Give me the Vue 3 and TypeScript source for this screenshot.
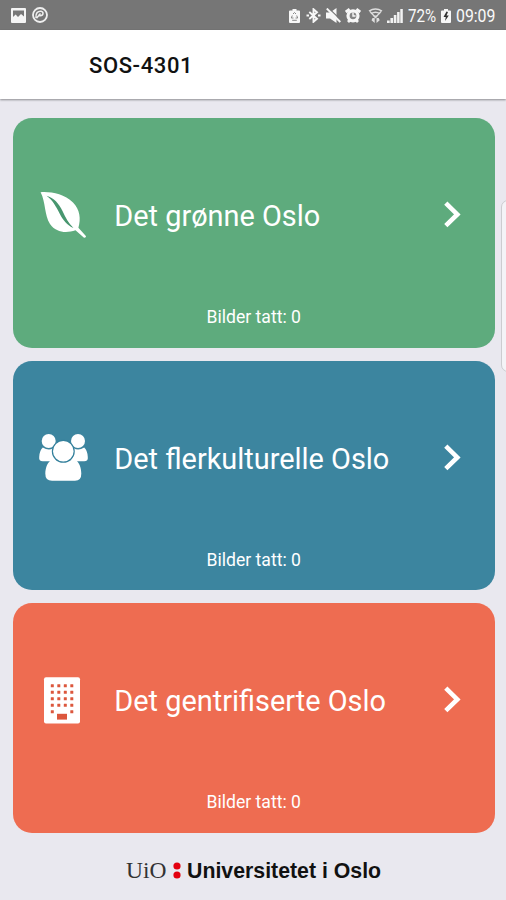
<script setup lang="ts">
interface Theme {
  id: 'green' | 'culture' | 'gentry'
  title: string
  photos: number
}

const themes: Theme[] = [
  { id: 'green', title: 'Det grønne Oslo', photos: 0 },
  { id: 'culture', title: 'Det flerkulturelle Oslo', photos: 0 },
  { id: 'gentry', title: 'Det gentrifiserte Oslo', photos: 0 },
]

const windows: { x: number; y: number }[] = []
for (let row = 0; row < 5; row++) {
  for (let col = 0; col < 4; col++) {
    if (row === 4 && (col === 1 || col === 2)) continue
    windows.push({ x: 12.8 + col * 6.5, y: 11.5 + row * 6.5 })
  }
}
</script>

<template>
  <div class="screen">
    <div class="status">
      <div class="status-left">
        <svg width="15" height="15" viewBox="0 0 15 15">
          <path fill="#f4f4f4" fill-rule="evenodd" d="M1 0H14Q15 0 15 1V14Q15 15 14 15H1Q0 15 0 14V1Q0 0 1 0ZM2 2.5V9L4.6 6.6L7 9L10 6L13 8.5V2.5Z" />
        </svg>
        <svg width="16" height="16" viewBox="0 0 16 16" fill="none" stroke="#efefef">
          <circle cx="8" cy="8" r="7" stroke-width="1.8" />
          <path d="M4 10.8C3.2 6 6 4 9 4.2C12 4.8 11.6 8.8 8.2 8.7L6.2 8.6M4.5 11.2L8.5 6.5" stroke-width="1.5" />
        </svg>
      </div>
      <div class="status-right">
        <svg class="s-saver" width="11" height="14" viewBox="0 0 11 14">
          <path fill="#f7f7f7" d="M3.5 0H7.5V1.5H10Q11 1.5 11 2.5V13Q11 14 10 14H1Q0 14 0 13V2.5Q0 1.5 1 1.5H3.5Z" />
          <path fill="none" stroke="#888" stroke-width="1" d="M4 5L5.5 3.5L7 5M3.3 6.5L2.3 9H4.5M7.7 6.5L8.7 9H6.5M3.2 11.3H7.8" />
        </svg>
        <svg class="s-bt" width="15" height="15" viewBox="0 0 15 15" fill="none" stroke="#f7f7f7" stroke-width="1.9">
          <path d="M3.3 4L11 10.8L7.5 13.8V1.2L11 4.2L3.3 11" />
          <path d="M.5 7.5H3M12 7.5H14.5" stroke-width="2" />
        </svg>
        <svg class="s-mute" width="15" height="15" viewBox="0 0 15 15">
          <path fill="#f7f7f7" d="M0 4.5H4L10.5 0V15L4 10.5H0Z" />
          <path stroke="#767676" stroke-width="1.2" d="M2.5 0L15 12" />
          <path stroke="#f7f7f7" stroke-width="1.9" d="M.8 .5L14.3 14" />
        </svg>
        <svg class="s-alarm" width="16" height="15" viewBox="0 0 16 15">
          <path stroke="#f7f7f7" stroke-width="2.8" d="M.8 4L4.6 1.2M15.2 4L11.4 1.2M3 14L5 12M13 14L11 12" />
          <circle cx="8" cy="7.8" r="5" fill="#858585" stroke="#f7f7f7" stroke-width="3.2" />
          <path fill="none" stroke="#f7f7f7" stroke-width="1.4" d="M8 4.5V8H10.5" />
        </svg>
        <svg class="s-wifi" width="15" height="15" viewBox="0 0 15 15" fill="none" stroke="#dedede">
          <path stroke-width="1.5" d="M1 3.2Q7.5-1 14 3.2M3 5.7Q7.5 2.8 12 5.7" />
          <path stroke-width="1.2" d="M2 3.5L7.5 9.5L13 3.5" />
          <path fill="#dedede" stroke="none" d="M5 7.5H10L8.5 9.5H6.5ZM4.5 10H6.7V15L3.5 12.2ZM8.5 10H10.7L11.7 12.2L8.5 15Z" />
        </svg>
        <svg class="s-signal" width="16" height="14" viewBox="0 0 16 14" fill="#f2f2f2">
          <path d="M0 11.5H2.7V14H0ZM3.4 9H6.1V14H3.4ZM6.8 6H9.4V14H6.8ZM10.1 3H12.6V14H10.1ZM13.3 0H15.8V14H13.3Z" />
        </svg>
        <span class="percent">72%</span>
        <svg class="s-battery" width="10" height="14" viewBox="0 0 10 14">
          <path fill="#f7f7f7" d="M3 0H7V1.5H9Q10 1.5 10 2.5V13Q10 14 9 14H1Q0 14 0 13V2.5Q0 1.5 1 1.5H3Z" />
          <path fill="#333" d="M5.5 2.5L2.5 8H4.8L4 12L7.8 6.5H5.5L7 3Z" />
        </svg>
        <span class="clock">09:09</span>
      </div>
    </div>

    <header class="appbar"><h1>SOS-4301</h1></header>

    <main class="cards">
      <section v-for="theme in themes" :key="theme.id" class="card" :class="theme.id">
        <div class="row">
          <svg v-if="theme.id === 'green'" class="icon" viewBox="0 0 52 52">
            <path fill="#fff" d="M2.6 3.2C13 2.5 26 4.8 35 13.5C42 21 43 29.5 40.4 38.8L48.1 47.2Q47.6 48.8 46 48.7L37.5 41.3C28 44.6 18 43.5 12 35C6.2 25.8 7.8 13.2 2.6 3.2Z" />
            <path fill="#48966f" d="M8.5 6.8C16 9 20.8 14.5 24.5 22C27.5 28.5 30.5 34.5 35.5 39C29.2 36.5 25 31 21.6 24.5C18 17.5 14.5 11 8.5 6.8Z" />
          </svg>
          <svg v-else-if="theme.id === 'culture'" class="icon" viewBox="0 0 52 52" fill="#fff">
            <circle cx="10.7" cy="9" r="7" />
            <circle cx="40" cy="9" r="7" />
            <path d="M4.8 15.4Q10.5 19.2 15.2 16.2Q14 24 18.7 28L14.4 29.3H4.8Q.7 29.3 1.2 25Q1.4 18.5 4.8 15.4Z" />
            <path d="M46.2 15.4Q40.5 19.2 35.8 16.2Q37 24 32.3 28L36.6 29.3H46.2Q50.3 29.3 49.8 25Q49.6 18.5 46.2 15.4Z" />
            <path d="M14.5 27.2Q25.4 31 36.4 27.2C41.5 29.7 43.2 36 43.3 41.5Q43.4 48.8 37 48.8H14Q7.2 48.8 7.3 41.5C7.5 35.5 9.5 29.7 14.5 27.2Z" />
            <circle cx="25.3" cy="19.3" r="10.9" stroke="#34809c" stroke-width="1.2" />
          </svg>
          <svg v-else class="icon" viewBox="0 0 52 52">
            <rect x="6" y="3.3" width="36" height="46.2" rx="2" fill="#fff" />
            <rect v-for="(w, i) in windows" :key="i" :x="w.x" :y="w.y - 1.3" width="3" height="3" rx=".3" fill="#dc573d" />
            <rect x="19" y="39.8" width="10" height="5.8" fill="#dc573d" />
          </svg>
          <h2>{{ theme.title }}</h2>
          <svg class="chevron" width="18" height="28" viewBox="0 0 18 28">
            <path fill="none" stroke="#fff" stroke-width="4.6" d="M1.8 2.2L13.3 13.4L1.8 24.6" />
          </svg>
        </div>
        <p>Bilder tatt: {{ theme.photos }}</p>
      </section>
    </main>

    <footer class="brand">
      <span class="uio">UiO</span>
      <svg width="8" height="17" viewBox="0 0 8 17" fill="#e3000f">
        <circle cx="4" cy="4" r="3.6" />
        <circle cx="4" cy="13" r="3.6" />
      </svg>
      <span class="university">Universitetet i Oslo</span>
    </footer>
    <div class="edge-handle"></div>
  </div>
</template>

<style>
body {
  margin: 0;
}
</style>

<style scoped>
.screen {
  position: relative;
  display: flex;
  flex-direction: column;
  width: 506px;
  height: 900px;
  overflow: hidden;
  background: #e9e8ef;
  font-family: Roboto, "Liberation Sans", sans-serif;
}
svg {
  display: block;
  flex: none;
}
.status {
  box-sizing: border-box;
  display: flex;
  justify-content: space-between;
  height: 30px;
  padding: 0 11px;
  background: #767676;
  color: #fafafa;
}
.status-left,
.status-right {
  display: flex;
  align-items: center;
}
.status-left {
  gap: 6px;
}
.status-right {
  width: 206px;
  padding-top: 1px;
}
.s-bt {
  margin-left: 6px;
}
.s-mute {
  margin-left: 5px;
}
.s-alarm {
  margin-left: 4px;
}
.s-wifi {
  margin-left: 7px;
}
.s-signal {
  margin-left: 4px;
}
.percent,
.clock {
  font-size: 18.5px;
  line-height: 22px;
  white-space: nowrap;
  transform-origin: left center;
}
.percent {
  width: 28px;
  margin-left: 5px;
  transform: scaleX(0.82);
}
.s-battery {
  margin-left: 5px;
}
.clock {
  width: 40px;
  margin-left: 5px;
  transform: scaleX(0.855);
}
.appbar {
  box-sizing: border-box;
  display: flex;
  align-items: center;
  height: 69px;
  padding-left: 89px;
  background: #fff;
  box-shadow: 0 1px 2px rgba(0, 0, 0, 0.4);
}
h1,
h2,
p {
  margin: 0;
}
h1 {
  color: #111;
  font-size: 22px;
  font-weight: 500;
  line-height: 28px;
  letter-spacing: 0.6px;
  padding-top: 2px;
}
.cards {
  display: flex;
  flex-direction: column;
  gap: 13px;
  padding: 19px 11.5px 0 13px;
}
.card {
  height: 229.7px;
  overflow: hidden;
  border-radius: 19px;
  color: #fff;
}
.green {
  background: #5eab7d;
}
.culture {
  background: #3c859f;
}
.gentry {
  background: #ee6c51;
}
.row {
  display: flex;
  align-items: center;
  margin-top: 70px;
  padding: 0 32.5px 0 25px;
  height: 54px;
}
.icon {
  width: 52px;
  height: 52px;
}
h2 {
  flex: 1;
  padding: 2px 0 0 24.3px;
  font-size: 28.9px;
  font-weight: 400;
  line-height: 36px;
  white-space: nowrap;
}
p {
  margin-top: 64px;
  font-size: 17.6px;
  line-height: 22px;
  text-align: center;
}
.brand {
  display: flex;
  align-items: center;
  padding: 25px 0 0 126px;
  height: 24px;
  color: #111;
  white-space: nowrap;
}
.uio {
  width: 43px;
  color: #333;
  font: 23.5px/24px "Liberation Serif", serif;
}
.brand svg {
  margin-left: 4px;
}
.university {
  margin-left: 6px;
  padding-top: 1px;
  font: bold 21.3px/24px "Liberation Sans", sans-serif;
}
.edge-handle {
  position: absolute;
  top: 200px;
  right: -12px;
  box-sizing: border-box;
  width: 17px;
  height: 172px;
  border: 1px solid #ccccd0;
  border-radius: 7px;
  background: #f4f3f7;
}
</style>
